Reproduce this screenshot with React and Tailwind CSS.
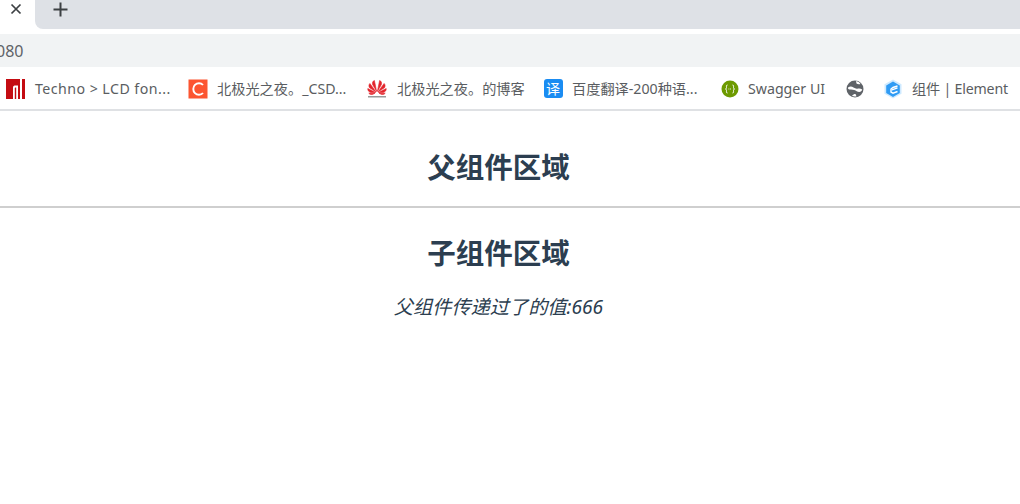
import React from "react";

const cjk = "font-['Noto_Sans','Noto_Sans_CJK_SC',sans-serif]";

function Mark({ children, mr }) {
  return <span className={`flex w-[20px] h-[20px] items-center justify-center shrink-0 ${mr}`}>{children}</span>;
}

function Bookmark({ icon, label, w, extra = "", gap = "mr-[9px]" }) {
  return (
    <div className={`flex items-center shrink-0 ${w}`}>
      <Mark mr={gap}>{icon}</Mark>
      <span className={`text-[14.2px] leading-[20px] text-[#5a5d61] whitespace-nowrap ${extra}`}>{label}</span>
    </div>
  );
}

const Techno = (
  <svg width="20" height="20" viewBox="0 0 20 20">
    <rect x="1" y="0" width="19" height="20" fill="#c40c12" />
    <path d="M8 20V8.500C8 7 9 6.500 10.500 6.500H13V20zM15 20V0h2v20z" fill="#fff" />
    <path d="M9.800 20V9.500c0-.8.400-1 1-1h.4V20z" fill="#c40c12" />
  </svg>
);
const Csdn = (
  <svg width="20" height="20" viewBox="0 0 20 20">
    <rect x="0.500" y="0.500" width="19" height="19" fill="#fc5531" />
    <path d="M15 6C14 4.800 12.600 4.200 11 4.200c-3.200 0-5.700 2.500-5.700 5.800s2.500 5.800 5.700 5.800c1.600 0 3-.6 4-1.800" fill="none" stroke="#fff" strokeWidth="1.900" />
  </svg>
);
const Huawei = (
  <svg width="22" height="22" viewBox="0 0 20 20">
    <g fill="#e3242b" stroke="#e3242b" strokeWidth="0.600" strokeLinejoin="round">
      <path d="M9.600 12.500 7.400 1.500C5.800 2 5.100 3.700 5.600 5.500z" />
      <path d="M10.400 12.500l2.200-11c1.600.5 2.300 2.200 1.800 4z" />
      <path d="M9 13 2.900 4.500C1.700 5.700 1.600 7.500 2.600 8.800z" />
      <path d="M11 13l6.100-8.500c1.200 1.200 1.300 3 .3 4.300z" />
      <path d="M8.500 13.500.8 9.500c-.2 1.800.7 3.300 2.900 3.900z" />
      <path d="M11.500 13.500l7.700-4c.2 1.800-.7 3.300-2.900 3.900z" />
      <path d="M8 14.200H1.800c.9 1.300 2.900 1.600 4.200 1z" />
      <path d="M12 14.200h6.200c-.9 1.300-2.900 1.600-4.200 1z" />
    </g>
    <rect x="1" y="17" width="18" height="1.500" fill="#9a9a9a" />
  </svg>
);
const Baidu = (
  <span className="flex w-[19px] h-[19px] items-center justify-center rounded-[3px] bg-[#1a8cf2] text-[14px] leading-none text-white">译</span>
);
const Swagger = (
  <svg width="20" height="20" viewBox="0 0 20 20">
    <circle cx="10" cy="10" r="8.500" fill="#6d9a00" />
    <path d="M7.500 6C6 6 6.500 7.500 6.500 8.500S6 10 5.500 10c.5 0 1 .5 1 1.500S6 14 7.500 14M12.500 6c1.500 0 1 1.500 1 2.500s.5 1.500 1 1.500c-.5 0-1 .5-1 1.500s.5 2.500-1 2.500" fill="none" stroke="#fff" strokeWidth="1" />
    <path d="M8.500 10h.8M10 10h.8" stroke="#fff" strokeWidth="1" />
  </svg>
);
const Globe = (
  <svg width="20" height="20" viewBox="0 0 20 20">
    <circle cx="10" cy="10" r="8.500" fill="#5f6368" />
    <path d="M3 8.500c2-1.500 4-1 5.500 0s3 1.500 4.500 1c1.500-.3 3 0 4.200 1-.3 1.500-1.500 2.500-3 2.500-2 0-3-1.500-5-2s-4.500 0-6-1z" fill="#fff" />
    <path d="M11 2c2 .3 3.500 1.500 4.500 3-1.500.5-3 .3-4-.5z" fill="#fff" />
    <path d="M7 17c1-1.500 2-2 3.500-2l1 2.300c-1.500.4-3 .2-4.500-.3z" fill="#fff" />
  </svg>
);
const Element = (
  <svg width="20" height="20" viewBox="0 0 20 20">
    <path d="M10 .5 18.500 5.300v9.400L10 19.500 1.500 14.700V5.300z" fill="#cfeaff" />
    <path d="M10 2.500 16.800 6.500v7.500L10 18l-6.800-4V6.500z" fill="#2f9bf4" />
    <path d="M14.500 7 10 8.500 8 10v3l2 1.200 4.500-1.700M9 10.800l5.500-2" fill="none" stroke="#fff" strokeWidth="1.400" />
  </svg>
);

export default function App() {
  return (
    <div className={`w-[1020px] h-[504px] overflow-hidden bg-white ${cjk}`}>
      <div className="flex h-[29px]">
        <div className="flex w-[35px] items-center pl-[9px] pb-[11px]">
          <svg width="14" height="14" viewBox="0 0 14 14">
            <path d="M2.500 2.500l9 9M11.500 2.500l-9 9" stroke="#3c4043" strokeWidth="1.700" />
          </svg>
        </div>
        <div className="flex flex-1 items-center pl-[17px] pb-[10px] rounded-bl-[8px] bg-[#dee1e6]">
          <svg width="17" height="17" viewBox="0 0 17 17">
            <path d="M8.500 1.500v14M1.500 8.500h14" stroke="#3c4043" strokeWidth="2" />
          </svg>
        </div>
      </div>
      <div className="h-[5px] bg-white" />
      <div className="flex h-[33px] items-center bg-[#f1f3f4] overflow-hidden">
        <span className="-ml-[4px] text-[16px] leading-[20px] text-[#5f6368]">080</span>
      </div>
      <div className="flex h-[44px] items-center border-b-2 border-[#dfe1e4] pl-[5px] pt-[1px]">
        <Bookmark icon={Techno} label="Techno > LCD fon..." w="w-[183px]" extra="tracking-[0.45px]" gap="mr-[10px]" />
        <Bookmark icon={Csdn} label="北极光之夜。_CSD..." w="w-[179px]" />
        <Bookmark icon={Huawei} label="北极光之夜。的博客" w="w-[176px]" gap="mr-[10px]" />
        <Bookmark icon={Baidu} label="百度翻译-200种语..." w="w-[177px]" />
        <Bookmark icon={Swagger} label="Swagger UI" w="w-[125px]" gap="mr-[8px]" />
        <div className="flex w-[38px] shrink-0"><Mark>{Globe}</Mark></div>
        <Bookmark icon={Element} label="组件 | Element" w="w-[130px]" extra="tracking-[-0.2px]" />
      </div>
      <div className="h-[97px] flex items-center justify-center border-b-2 border-[#cfcfcf] pt-[17px] pr-[23px]">
        <h1 className="text-[28.5px] leading-[38px] font-bold text-[#2c3e50]">父组件区域</h1>
      </div>
      <div className="pr-[23px] text-center text-[#2c3e50]">
        <h2 className="pt-[26px] text-[28.5px] leading-[38px] font-bold">子组件区域</h2>
        <p className="pt-[22px] text-[19.2px] leading-[26px] italic">父组件传递过了的值:666</p>
      </div>
    </div>
  );
}
